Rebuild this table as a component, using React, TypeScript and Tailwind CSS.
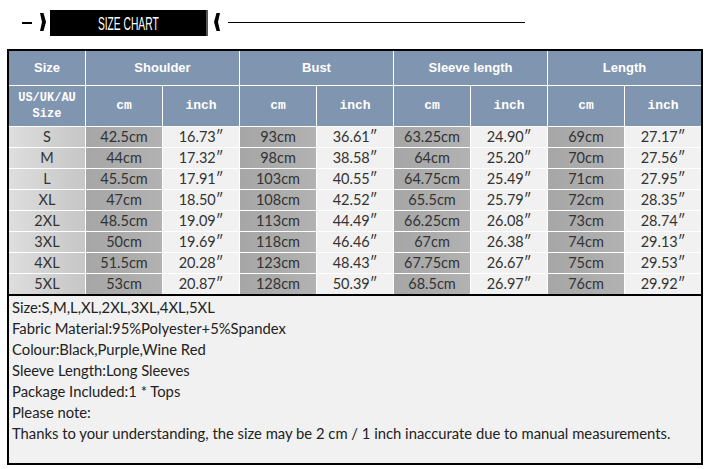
import React from "react"

const rows = [
  ["S", "42.5cm", "16.73\u2033", "93cm", "36.61\u2033", "63.25cm", "24.90\u2033", "69cm", "27.17\u2033"],
  ["M", "44cm", "17.32\u2033", "98cm", "38.58\u2033", "64cm", "25.20\u2033", "70cm", "27.56\u2033"],
  ["L", "45.5cm", "17.91\u2033", "103cm", "40.55\u2033", "64.75cm", "25.49\u2033", "71cm", "27.95\u2033"],
  ["XL", "47cm", "18.50\u2033", "108cm", "42.52\u2033", "65.5cm", "25.79\u2033", "72cm", "28.35\u2033"],
  ["2XL", "48.5cm", "19.09\u2033", "113cm", "44.49\u2033", "66.25cm", "26.08\u2033", "73cm", "28.74\u2033"],
  ["3XL", "50cm", "19.69\u2033", "118cm", "46.46\u2033", "67cm", "26.38\u2033", "74cm", "29.13\u2033"],
  ["4XL", "51.5cm", "20.28\u2033", "123cm", "48.43\u2033", "67.75cm", "26.67\u2033", "75cm", "29.53\u2033"],
  ["5XL", "53cm", "20.87\u2033", "128cm", "50.39\u2033", "68.5cm", "26.97\u2033", "76cm", "29.92\u2033"],
]

const notes = [
  "Size:S,M,L,XL,2XL,3XL,4XL,5XL",
  "Fabric Material:95%Polyester+5%Spandex",
  "Colour:Black,Purple,Wine Red",
  "Sleeve Length:Long Sleeves",
  "Package Included:1 * Tops",
  "Please note:",
  "Thanks to your understanding, the size may be 2 cm / 1 inch inaccurate due to manual measurements.",
]

const groups = ["Shoulder", "Bust", "Sleeve length", "Length"]

function cellBg(i: number) {
  if (i === 0) return "bg-gradient-to-r from-[#dedede] to-[#c6c6c6]"
  if (i % 2 === 1) return "bg-gradient-to-r from-[#a6a6a6] to-[#b2b2b2]"
  return "bg-[#f1f1f1]"
}

export default function App() {
  return (
    <div className="w-[710px] h-[469px] bg-white overflow-hidden relative">
      {/* title banner */}
      <div className="relative h-[49px]">
        <div className="absolute left-[22px] top-[22px] w-[10px] h-[2px] bg-black" />
        <svg className="absolute left-0 top-0" width="230" height="40" viewBox="0 0 230 40">
          <polygon points="40,13 43.5,13 46,22 43.5,31 40,31 42,22" fill="#000" />
          <polygon points="220,13 216.5,13 214,22 216.5,31 220,31 218,22" fill="#000" />
        </svg>
        <div className="absolute left-[50px] top-[10px] w-[158px] h-[26px] bg-black flex items-center justify-center border-r-2 border-[#555]">
          <span className="text-white text-[19px] leading-none scale-x-[0.54]" style={{ fontFamily: "'Liberation Sans', Arial, sans-serif" }}>
            SIZE CHART
          </span>
        </div>
        <div className="absolute left-[228px] top-[22px] w-[297px] h-px bg-black" />
      </div>

      {/* table */}
      <div className="ml-[7px] w-[696px] h-[416px] border-2 border-black flex flex-col bg-[#f1f1f1]">
        <div
          className="grid grid-cols-[repeat(9,76px)] grid-rows-[34px_40px_repeat(8,20px)] gap-px bg-white"
          style={{ fontFamily: "Lato, 'Liberation Sans', sans-serif" }}
        >
          <div className="bg-[#8095b0] flex items-center justify-center text-white font-bold text-[13px]" style={{ fontFamily: "'Liberation Sans', Arial, sans-serif" }}>
            Size
          </div>
          {groups.map(g => (
            <div key={g} className="col-span-2 bg-[#8095b0] flex items-center justify-center text-white font-bold text-[13px]" style={{ fontFamily: "'Liberation Sans', Arial, sans-serif" }}>
              {g}
            </div>
          ))}
          <div className="bg-[#8095b0] flex flex-col items-center justify-center text-white font-bold text-[12px] leading-[16px]" style={{ fontFamily: "'Liberation Mono', monospace" }}>
            <span>US/UK/AU</span>
            <span>Size</span>
          </div>
          {groups.map(g => (
            <React.Fragment key={g}>
              <div className="bg-[#8095b0] flex items-center justify-center text-white font-bold text-[13px]" style={{ fontFamily: "'Liberation Mono', monospace" }}>cm</div>
              <div className="bg-[#8095b0] flex items-center justify-center text-white font-bold text-[13px]" style={{ fontFamily: "'Liberation Mono', monospace" }}>inch</div>
            </React.Fragment>
          ))}
          {rows.map(r =>
            r.map((v, i) => (
              <div key={r[0] + i} className={`${cellBg(i)} flex items-center justify-center text-[14.5px] text-[#333]`}>
                {v}
              </div>
            ))
          )}
        </div>
        <div className="h-[2px] bg-black" />
        <div className="flex-1 pl-[3px] pt-px text-[14.8px] leading-[21px] text-[#222]" style={{ fontFamily: "Lato, 'Liberation Sans', sans-serif" }}>
          {notes.map(n => (
            <div key={n}>{n}</div>
          ))}
        </div>
      </div>
    </div>
  )
}
